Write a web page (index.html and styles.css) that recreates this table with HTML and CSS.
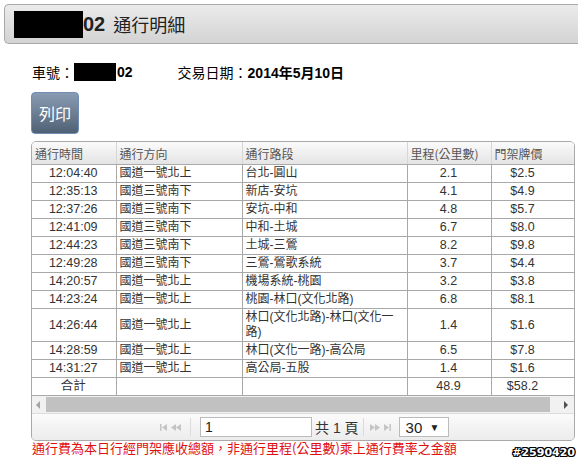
FILE: index.html
```html
<!DOCTYPE html>
<html lang="zh-Hant">
<head>
<meta charset="utf-8">
<link rel="stylesheet" href="styles.css">
</head>
<body>
<div class="titlebar">
  <span class="mask mask-title"></span><span class="title-num">02</span><span class="title-text">通行明細</span>
</div>
<div class="info">
  <div class="info-item"><span class="lbl">車號：</span><span class="mask mask-plate"></span><b>02</b></div>
  <div class="info-item date"><span class="lbl">交易日期：</span><b>2014年5月10日</b></div>
</div>
<button class="print">列印</button>
<div class="grid">
  <div class="grid-body">
    <table>
      <colgroup>
        <col class="c1"><col class="c2"><col class="c3"><col class="c4"><col class="c5">
      </colgroup>
      <thead>
        <tr><th>通行時間</th><th>通行方向</th><th>通行路段</th><th>里程(公里數)</th><th>門架牌價</th></tr>
      </thead>
      <tbody>
        <tr><td class="ctr">12:04:40</td><td>國道一號北上</td><td>台北-圓山</td><td class="ctr">2.1</td><td class="ctr">$2.5</td></tr>
        <tr><td class="ctr">12:35:13</td><td>國道三號南下</td><td>新店-安坑</td><td class="ctr">4.1</td><td class="ctr">$4.9</td></tr>
        <tr><td class="ctr">12:37:26</td><td>國道三號南下</td><td>安坑-中和</td><td class="ctr">4.8</td><td class="ctr">$5.7</td></tr>
        <tr><td class="ctr">12:41:09</td><td>國道三號南下</td><td>中和-土城</td><td class="ctr">6.7</td><td class="ctr">$8.0</td></tr>
        <tr><td class="ctr">12:44:23</td><td>國道三號南下</td><td>土城-三鶯</td><td class="ctr">8.2</td><td class="ctr">$9.8</td></tr>
        <tr><td class="ctr">12:49:28</td><td>國道三號南下</td><td>三鶯-鶯歌系統</td><td class="ctr">3.7</td><td class="ctr">$4.4</td></tr>
        <tr><td class="ctr">14:20:57</td><td>國道一號北上</td><td>機場系統-桃園</td><td class="ctr">3.2</td><td class="ctr">$3.8</td></tr>
        <tr><td class="ctr">14:23:24</td><td>國道一號北上</td><td>桃園-林口(文化北路)</td><td class="ctr">6.8</td><td class="ctr">$8.1</td></tr>
        <tr><td class="ctr">14:26:44</td><td>國道一號北上</td><td>林口(文化北路)-林口(文化一路)</td><td class="ctr">1.4</td><td class="ctr">$1.6</td></tr>
        <tr><td class="ctr">14:28:59</td><td>國道一號北上</td><td>林口(文化一路)-高公局</td><td class="ctr">6.5</td><td class="ctr">$7.8</td></tr>
        <tr><td class="ctr">14:31:27</td><td>國道一號北上</td><td>高公局-五股</td><td class="ctr">1.4</td><td class="ctr">$1.6</td></tr>
        <tr><td class="ctr">合計</td><td></td><td></td><td class="ctr">48.9</td><td class="ctr">$58.2</td></tr>
      </tbody>
    </table>
  </div>
  <div class="hscroll">
    <span class="arrow arrow-left"></span>
    <span class="thumb"></span>
    <span class="arrow arrow-right"></span>
  </div>
  <div class="pager">
    <svg class="pg-icon" width="7" height="7" viewBox="0 0 7 7"><rect x="0" y="0" width="1.5" height="7" fill="#c4c4c4"/><polygon points="7,0 2,3.5 7,7" fill="#c4c4c4"/></svg>
    <svg class="pg-icon" width="10" height="7" viewBox="0 0 10 7"><polygon points="5,0 0,3.5 5,7" fill="#c4c4c4"/><polygon points="10,0 5,3.5 10,7" fill="#c4c4c4"/></svg>
    <span class="pg-sep"></span>
    <span class="pg-input">1</span>
    <span class="pg-total">共 1 頁</span>
    <span class="pg-sep pg-sep2"></span>
    <svg class="pg-icon" width="10" height="7" viewBox="0 0 10 7"><polygon points="0,0 5,3.5 0,7" fill="#c4c4c4"/><polygon points="5,0 10,3.5 5,7" fill="#c4c4c4"/></svg>
    <svg class="pg-icon" width="7" height="7" viewBox="0 0 7 7"><polygon points="0,0 5,3.5 0,7" fill="#c4c4c4"/><rect x="5.5" y="0" width="1.5" height="7" fill="#c4c4c4"/></svg>
    <span class="pg-select">30 <span class="caret">▼</span></span>
  </div>
</div>
<div class="footer">
  <span class="note">通行費為本日行經門架應收總額，非通行里程(公里數)乘上通行費率之金額</span>
  <span class="stamp">#2590420</span>
</div>
</body>
</html>
```
FILE: styles.css
```css
html, body {
  margin: 0;
  padding: 0;
  background: #ffffff;
  font-family: "Liberation Sans", Arial, "Noto Sans CJK TC", sans-serif;
  color: #000;
}

.titlebar {
  margin: 4px 0 0 4px;
  height: 38px;
  border: 1px solid #a9a9a9;
  border-right: none;
  border-radius: 5px 0 0 5px;
  background: linear-gradient(#ebebeb, #d3d3d3);
  display: flex;
  align-items: center;
  padding-left: 9px;
}
.mask {
  display: inline-block;
  background: #000;
}
.mask-title {
  width: 69px;
  height: 27px;
}
.title-num {
  font-size: 20px;
  font-weight: bold;
  color: #222;
}
.title-text {
  font-family: "Noto Sans CJK TC", sans-serif;
  font-size: 18px;
  color: #222;
  margin-left: 8px;
}

.info {
  display: flex;
  align-items: center;
  margin: 18px 0 0 32px;
  font-size: 14px;
  height: 20px;
}
.info-item {
  display: flex;
  align-items: center;
}
.info .lbl {
  font-family: "Noto Sans CJK TC", sans-serif;
}
.info b {
  font-family: "Liberation Sans", "Noto Sans CJK TC", sans-serif;
  font-weight: bold;
}
.mask-plate {
  width: 42px;
  height: 18px;
  margin-right: 1px;
}
.date {
  margin-left: 45px;
}

.print {
  display: block;
  margin: 10px 0 0 31px;
  width: 48px;
  height: 42px;
  border: 1px solid #6f8db5;
  border-radius: 4px;
  background: linear-gradient(#8a9cb3, #4f6173);
  color: #fff;
  font-family: "Noto Sans CJK TC", sans-serif;
  font-size: 16px;
  padding: 0;
}

.grid {
  margin: 7px 0 0 31px;
  width: 544px;
  border: 1px solid #aaa;
  border-radius: 5px;
  overflow: hidden;
  box-sizing: border-box;
}
.grid-body {
  overflow: hidden;
}
table {
  border-collapse: collapse;
  width: 547px;
  table-layout: fixed;
  font-size: 12px;
}
col.c1 { width: 84px; }
col.c2 { width: 126px; }
col.c3 { width: 165px; }
col.c4 { width: 84px; }
col.c5 { width: 88px; }
th {
  height: 22px;
  padding: 0 0 0 3px;
  text-align: left;
  font-weight: normal;
  color: #555;
  font-family: "Noto Sans CJK TC", sans-serif;
  font-size: 12px;
  background: linear-gradient(#fafafa, #e4e4e4);
  border-right: 1px solid #d6d6d6;
  border-bottom: 1px solid #aaa;
}
td {
  padding: 1px 4px 1px 3px;
  line-height: 15px;
  color: #333;
  border-right: 1px solid #a8a8a8;
  border-bottom: 1px solid #a8a8a8;
  font-family: "Liberation Sans", "Noto Sans CJK TC", sans-serif;
  font-size: 12.5px;
  vertical-align: middle;
  overflow: hidden;
}
td:nth-child(2), td:nth-child(3) {
  font-size: 12px;
}
td:nth-child(5) {
  padding-right: 28px;
}
td.ctr {
  text-align: center;
}
tbody tr:last-child td {
  border-bottom: none;
}

.hscroll {
  height: 17px;
  background: #f1f1f1;
  border-top: 1px solid #a8a8a8;
  display: flex;
  align-items: center;
}
.arrow {
  width: 0;
  height: 0;
  border-top: 4px solid transparent;
  border-bottom: 4px solid transparent;
}
.arrow-left {
  border-right: 4px solid #a3a3a3;
  margin: 0 6px 0 4px;
}
.arrow-right {
  border-left: 4px solid #505050;
  margin: 0 6px 0 14px;
}
.thumb {
  flex: 1;
  height: 15px;
  background: #c1c1c1;
}

.pager {
  height: 26px;
  border-top: 1px solid #ddd;
  background: linear-gradient(#fbfbfb, #ececec);
  display: flex;
  align-items: center;
  padding-left: 128px;
  font-size: 14px;
}
.pg-icon {
  margin-right: 4px;
}
.pg-sep {
  width: 1px;
  height: 18px;
  background: #dcdcdc;
  margin: 0 9px 0 5px;
}
.pg-sep2 {
  margin: 0 6px 0 4px;
}
.pg-input {
  width: 106px;
  height: 18px;
  border: 1px solid #bbb;
  background: #fff;
  padding-left: 4px;
  line-height: 18px;
  color: #222;
}
.pg-total {
  margin-left: 3px;
  color: #333;
  font-family: "Liberation Sans", "Noto Sans CJK TC", sans-serif;
  font-size: 14px;
}
.pg-select {
  margin-left: 4px;
  width: 42px;
  height: 18px;
  border: 1px solid #bbb;
  background: #fff;
  padding-left: 6px;
  line-height: 19px;
  color: #222;
  font-size: 15px;
}
.caret {
  font-size: 10px;
  margin-left: 3px;
  vertical-align: 2px;
}

.footer {
  display: flex;
  justify-content: space-between;
  align-items: flex-start;
  margin: -1px 3px 0 32px;
}
.note {
  color: #e01010;
  font-family: "Noto Sans CJK TC", sans-serif;
  font-size: 13px;
  line-height: 16px;
}
.stamp {
  margin-top: 7px;
  font-family: "DejaVu Sans", sans-serif;
  font-size: 11px;
  line-height: 12px;
  font-weight: bold;
  color: #fff;
  text-shadow: 1px 0 0 #000, -1px 0 0 #000, 0 1px 0 #000, 0 -1px 0 #000, 1px 1px 0 #000, -1px -1px 0 #000, 1px -1px 0 #000, -1px 1px 0 #000;
}
```
